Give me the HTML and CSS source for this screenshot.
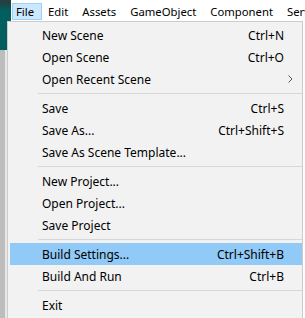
FILE: index.html
```html
<!DOCTYPE html>
<html>
<head>
<meta charset="utf-8">
<link rel="stylesheet" href="styles.css">
</head>
<body>
<div class="screen">
  <div class="side">
    <div class="side-teal"></div>
    <div class="side-grey"></div>
  </div>
  <div class="menubar">
    <span class="mb-item active">File</span>
    <span class="mb-item">Edit</span>
    <span class="mb-item">Assets</span>
    <span class="mb-item">GameObject</span>
    <span class="mb-item">Component</span>
    <span class="mb-item">Services</span>
  </div>
  <div class="dropdown">
    <div class="item"><span class="label">New Scene</span><span class="key">Ctrl+N</span></div>
    <div class="item"><span class="label">Open Scene</span><span class="key">Ctrl+O</span></div>
    <div class="item"><span class="label">Open Recent Scene</span><svg class="arrow" width="5" height="8" viewBox="0 0 5 8"><path d="M0.5 0.5 L4 4 L0.5 7.5" fill="none" stroke="#555" stroke-width="1"/></svg></div>
    <div class="sep"></div>
    <div class="item"><span class="label">Save</span><span class="key">Ctrl+S</span></div>
    <div class="item"><span class="label">Save As...</span><span class="key">Ctrl+Shift+S</span></div>
    <div class="item"><span class="label">Save As Scene Template...</span></div>
    <div class="sep"></div>
    <div class="item"><span class="label">New Project...</span></div>
    <div class="item"><span class="label">Open Project...</span></div>
    <div class="item"><span class="label">Save Project</span></div>
    <div class="sep"></div>
    <div class="item hl"><span class="label">Build Settings...</span><span class="key">Ctrl+Shift+B</span></div>
    <div class="item"><span class="label">Build And Run</span><span class="key">Ctrl+B</span></div>
    <div class="sep"></div>
    <div class="item"><span class="label">Exit</span></div>
  </div>
</div>
</body>
</html>
```
FILE: styles.css
```css
html, body {
  margin: 0;
  padding: 0;
  background: #ffffff;
}
.screen {
  position: relative;
  width: 305px;
  height: 318px;
  overflow: hidden;
  font-family: "Noto Sans", "Noto Sans CJK KR", sans-serif;
  font-size: 12px;
  color: #000;
  background: #ffffff;
}
.side {
  position: absolute;
  left: 0;
  top: 0;
  width: 11px;
  height: 318px;
  display: flex;
  flex-direction: column;
}
.side-teal {
  height: 50px;
  background: linear-gradient(#24403f 0, #24403f 3px, #005e5e 10px, #005e5e 100%);
}
.side-grey {
  flex: 1;
  background: linear-gradient(90deg, #bdbdbd 0, #bdbdbd 5px, #e8e8e8 5px, #e8e8e8 11px);
}
.menubar {
  position: absolute;
  left: 11px;
  top: 0;
  right: 0;
  height: 21px;
  display: flex;
  align-items: stretch;
  padding-top: 3px;
  box-sizing: border-box;
  background: #ffffff;
  padding-left: 1px;
  font-size: 11.3px;
}
.mb-item {
  display: flex;
  align-items: center;
  padding: 0 7px 1px 3px;
  margin-right: 2px;
  height: 17px;
  box-sizing: border-box;
  border: 1px solid transparent;
  white-space: nowrap;
}
.mb-item.active {
  background: #cce8ff;
  border-color: #99d1ff;
}
.dropdown {
  position: absolute;
  left: 7px;
  top: 21px;
  width: 296px;
  height: 310px;
  box-sizing: border-box;
  border: 1px solid #cccccc;
  background: #f2f2f2;
  padding: 2px 0 0 2px;
}
.item {
  height: 22px;
  display: flex;
  align-items: center;
  padding: 0 18px 0 32px;
  white-space: nowrap;
}
.item.hl {
  background: #91c9f7;
}
.label {
  flex: 1;
}
.key {
  text-align: right;
}
.arrow {
  display: block;
  margin-right: -9px;
}
.sep {
  height: 1px;
  margin: 3px 0 3px 28px;
  background: #d7d7d7;
}
```
